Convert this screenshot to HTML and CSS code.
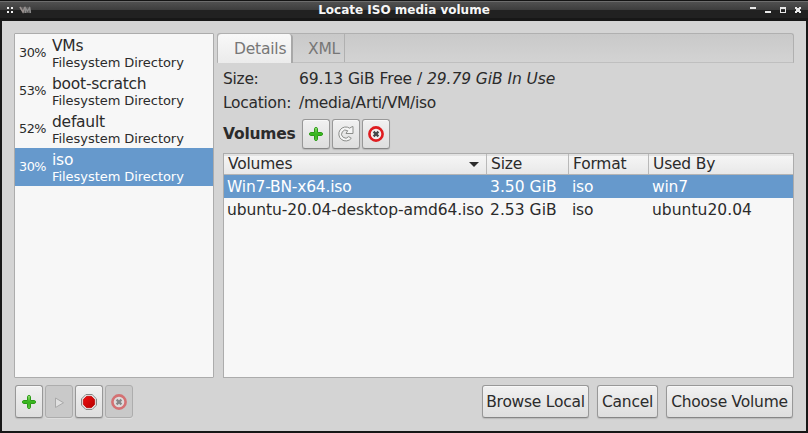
FILE: index.html
```html
<!DOCTYPE html>
<html lang="en">
<head>
<meta charset="utf-8">
<title>Locate ISO media volume</title>
<link rel="stylesheet" href="styles.css">
</head>
<body>
<svg width="0" height="0" class="defs" aria-hidden="true">
  <defs>
    <linearGradient id="green" x1="0" y1="0" x2="0" y2="1"><stop offset="0" stop-color="#8fdc6f"/><stop offset=".5" stop-color="#35b51b"/><stop offset="1" stop-color="#58c43c"/></linearGradient>
    <linearGradient id="red" x1="0" y1="0" x2="1" y2="1"><stop offset="0" stop-color="#f01010"/><stop offset="1" stop-color="#b50000"/></linearGradient>
    <symbol id="add" viewBox="0 0 16 16"><path d="M7.200 1.500h1.600l.7 1v4h4l1 .7v1.600l-1 .7h-4v4l-.7 1H7.200l-.7-1v-4h-4l-1-.7V7.200l1-.7h4v-4z" fill="url(#green)" stroke="#2c9a18" stroke-linejoin="round"/></symbol>
    <symbol id="delete" viewBox="0 0 16 16"><circle cx="8" cy="8" r="6.600" fill="#f3eeee" stroke="#df1c20" stroke-width="2.600"/><path d="M5.600 5.600l4.800 4.800M10.400 5.600l-4.800 4.800" stroke="#45484a" stroke-width="2.200"/></symbol>
  </defs>
</svg>
<header class="titlebar">
  <svg class="handle" width="6" height="6" fill="#f2f2f2"><path d="M0 0h2v2H0zM4 0h2v2H4zM0 4h2v2H0zM4 4h2v2H4z"/></svg>
  <svg class="app-icon" width="13" height="8" fill="none"><path d="M0 1h12v6H4z" fill="#5d5b5b"/><path d="M1 1l3 5 2-5" stroke="#99908e" stroke-width="1.500"/><path d="M6.500 7V2l2 3 2-3 1 5" stroke="#8c8c8c" stroke-width="1.300"/></svg>
  <h1>Locate ISO media volume</h1>
  <svg class="controls" width="51" height="6" fill="#e8e8e8"><path d="M0 0h6v2H0zM15 4h6v2h-6z"/><path d="M30 0h6v6h-6zM31 2v3h4V2z" fill-rule="evenodd"/><path d="M45 0h2v1h2V0h2v2h-1v2h1v2h-2V5h-2v1h-2V4h1V2h-1z"/></svg>
</header>
<main class="window">
  <div class="panes">
    <ul class="pools">
      <li><span class="pct">30%</span><div><b>VMs</b><small>Filesystem Directory</small></div></li>
      <li><span class="pct">53%</span><div><b>boot-scratch</b><small>Filesystem Directory</small></div></li>
      <li><span class="pct">52%</span><div><b>default</b><small>Filesystem Directory</small></div></li>
      <li class="selected"><span class="pct">30%</span><div><b>iso</b><small>Filesystem Directory</small></div></li>
    </ul>
    <section class="details">
      <nav class="tabs"><span class="tab active">Details</span><span class="tab">XML</span></nav>
      <dl class="info">
        <dt>Size:</dt><dd class="wide">69.13 GiB Free / <i>29.79 GiB In Use</i></dd>
        <dt>Location:</dt><dd>/media/Arti/VM/iso</dd>
      </dl>
      <div class="volume-bar">
        <h2>Volumes</h2>
        <button class="icon-btn" aria-label="Add"><svg width="16" height="16"><use href="#add"/></svg></button>
        <button class="icon-btn" aria-label="Refresh"><svg width="16" height="16" viewBox="0 0 16 16"><path d="M13.300 12.300A7 7 0 1 1 11.800 2.200L13 1.200l2-.7v7H8l1.700-2.800A4 4 0 1 0 10.700 10.600z" fill="#f5f5f5" stroke="#8b8d8a" stroke-linejoin="round"/></svg></button>
        <button class="icon-btn" aria-label="Delete"><svg width="16" height="16"><use href="#delete"/></svg></button>
      </div>
      <div class="table">
        <div class="row head"><span>Volumes<svg width="10" height="5"><path d="M0 0h10L5 5z" fill="#2b2b2b"/></svg></span><span>Size</span><span>Format</span><span>Used By</span></div>
        <div class="row selected"><span>Win7-BN-x64.iso</span><span class="wide">3.50 GiB</span><span>iso</span><span>win7</span></div>
        <div class="row"><span class="long">ubuntu-20.04-desktop-amd64.iso</span><span class="wide">2.53 GiB</span><span>iso</span><span class="wide">ubuntu20.04</span></div>
      </div>
    </section>
  </div>
  <footer class="actions">
    <div class="pool-actions">
      <button class="icon-btn" aria-label="Add pool"><svg width="16" height="16"><use href="#add"/></svg></button>
      <button class="icon-btn" aria-label="Start pool" disabled><svg width="16" height="16" viewBox="0 0 16 16"><path d="M4.500 4v9.500l8-4.750z" fill="#e0e0e0" stroke="#a9a9a9"/></svg></button>
      <button class="icon-btn" aria-label="Stop pool"><svg width="16" height="16" viewBox="0 0 16 16"><path d="M4.900.5h6.200l4.400 4.400v6.200l-4.400 4.400H4.900L.5 11.100V4.900z" fill="#eee" stroke="#858885"/><path d="M5.600 2.300h4.800l3.300 3.300v4.800l-3.300 3.300H5.600l-3.300-3.300V5.600z" fill="url(#red)" stroke="#b80000" stroke-width=".7"/></svg></button>
      <button class="icon-btn" aria-label="Delete pool" disabled><svg class="faded" width="16" height="16"><use href="#delete"/></svg></button>
    </div>
    <div class="dialog-actions">
      <button class="browse">Browse Local</button>
      <button class="cancel">Cancel</button>
      <button class="choose">Choose Volume</button>
    </div>
  </footer>
</main>
</body>
</html>
```
FILE: styles.css
```css
* { box-sizing: border-box; }
body {
  margin: 0;
  width: 808px;
  height: 433px;
  overflow: hidden;
  background: #171717;
  color: #2b2b2b;
  font: 15.5px/24px "DejaVu Sans", sans-serif;
  letter-spacing: -0.2px;
  white-space: nowrap;
}
.defs { position: absolute; }
.titlebar {
  display: flex;
  align-items: center;
  height: 21px;
  padding: 0 7px 2px 7px;
  border-top: 1px solid #141414;
  background: linear-gradient(#6d6d6d 0 1px, #505050 1px, #3d3d3d 9px, #212121 9px 17px, #171717 17px);
}
.app-icon { margin-left: 6px; }
.titlebar h1 {
  flex: 1;
  margin: 0;
  padding: 0 10px 0 36px;
  color: #f6f6f6;
  font-size: 12px;
  line-height: 18px;
  letter-spacing: 0;
  text-align: center;
}
.window {
  display: flex;
  flex-direction: column;
  gap: 7px;
  margin: 0 2px;
  height: 410px;
  padding: 12px 12px 13px;
  background: #d4d4d4;
}
.panes { display: flex; gap: 3px; height: 345px; }
.pools {
  width: 200px;
  margin: 0;
  padding: 0;
  border: 1px solid #acacac;
  border-radius: 1px;
  background: #f7f7f7;
  list-style: none;
}
.pools li { display: flex; height: 38px; padding-left: 4px; }
.pools div { display: flex; flex-direction: column; }
.pct { width: 33px; font-size: 12.8px; line-height: 37px; letter-spacing: -0.5px; }
.pools b { font-weight: 400; line-height: 17px; padding-top: 4px; letter-spacing: -0.25px; }
.pools small { margin-top: -1px; font-size: 13px; line-height: 17px; letter-spacing: -0.05px; }
.selected { background: #6699cc; color: #fff; }
.details { flex: 1; display: flex; flex-direction: column; }
.tabs {
  display: flex;
  height: 30px;
  border: 1px solid #b0b0b0;
  border-bottom-color: #bfbfbf;
  border-radius: 3px 3px 0 0;
  background: linear-gradient(#c9c9c9, #d3d3d3);
  color: #777;
}
.tab { width: 52px; padding-left: 15px; line-height: 30px; border-right: 1px solid #b0b0b0; }
.tab.active {
  width: 75px;
  height: 29px;
  padding-left: 16px;
  border-right: 2px solid #a8a8a8;
  border-radius: 4px 4px 0 0;
  background: linear-gradient(#f9f9f9, #ebebeb);
}
.info {
  display: grid;
  grid-template-columns: 76px 1fr;
  grid-auto-rows: 24px;
  margin: 4px 0 0 6px;
}
.info dd { margin: 0; }
.info dt, .info dd { letter-spacing: -0.3px; }
.info .wide { letter-spacing: -0.07px; }
.wide { letter-spacing: 0.03px; }
.volume-bar { display: flex; align-items: center; gap: 2px; height: 31px; margin: 3px 0 0 6px; }
.volume-bar h2 { width: 77px; margin: 0; font-size: 15.5px; }
button {
  height: 33px;
  padding: 0;
  border: 1px solid #989898;
  border-bottom-color: #868686;
  border-radius: 3px;
  background: linear-gradient(#f1f1f1, #dedede);
  box-shadow: inset 0 1px #f8f8f8, 0 1px 1px #bababa;
  color: inherit;
  font: inherit;
  letter-spacing: -0.25px;
}
.icon-btn { display: grid; place-items: center; width: 28px; }
.volume-bar button { height: 30px; }
button:disabled { border-color: #adadad; background: #c9c9c9; box-shadow: 0 1px #dedede; }
.faded { opacity: .5; }
.table {
  flex: 1;
  margin: 4px 0 0 6px;
  border: 1px solid #acacac;
  background: #f7f7f7;
}
.row {
  display: grid;
  grid-template-columns: 263px 82px 80px 1fr;
  height: 23px;
  line-height: 24px;
}
.row span { padding-left: 3px; }
.row .long { letter-spacing: -0.08px; }
.row.head span { padding-left: 4px; }
.row.head { height: 21px; line-height: 20px; border-bottom: 1px solid #b4b4b4; background: linear-gradient(#e2e2e2 2px, #f5f5f5 2px, #e8e8e8); }
.head span { height: 20px; border-right: 1px solid #b9b9b9; }
.head span:first-child { display: flex; align-items: center; justify-content: space-between; padding-right: 7px; }
.head span:last-child { border: 0; }
.actions { display: flex; justify-content: space-between; padding: 0 1px; }
.pool-actions { display: flex; gap: 2px; }
.dialog-actions { display: flex; gap: 8px; }
.browse { width: 107px; }
.cancel { width: 61px; }
.choose { width: 127px; }
```
